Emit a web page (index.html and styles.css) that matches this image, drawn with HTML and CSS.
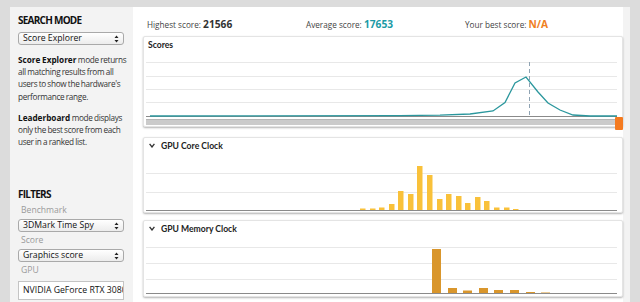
FILE: index.html
```html
<!DOCTYPE html>
<html lang="en">
<head>
    <meta charset="UTF-8">
    <title>Search</title>
    <link rel="stylesheet" href="styles.css">
</head>
<body>
<div class="page">

    <!-- Sidebar -->
    <div class="sidebar">
        <h3 class="side-title">SEARCH MODE</h3>
        <div class="select">
            <span>Score Explorer</span>
            <svg class="arrows" width="5" height="8" viewBox="0 0 5 8"><path d="M0.5 3 L2.5 0.5 L4.5 3 Z M0.5 5 L2.5 7.5 L4.5 5 Z" fill="#222"/></svg>
        </div>
        <p class="help"><b>Score Explorer</b> mode returns all matching results from all users to show the hardware's performance range.</p>
        <p class="help"><b>Leaderboard</b> mode displays only the best score from each user in a ranked list.</p>

        <h3 class="side-title filters">FILTERS</h3>
        <div class="label">Benchmark</div>
        <div class="select">
            <span>3DMark Time Spy</span>
            <svg class="arrows" width="5" height="8" viewBox="0 0 5 8"><path d="M0.5 3 L2.5 0.5 L4.5 3 Z M0.5 5 L2.5 7.5 L4.5 5 Z" fill="#222"/></svg>
        </div>
        <div class="label">Score</div>
        <div class="select">
            <span>Graphics score</span>
            <svg class="arrows" width="5" height="8" viewBox="0 0 5 8"><path d="M0.5 3 L2.5 0.5 L4.5 3 Z M0.5 5 L2.5 7.5 L4.5 5 Z" fill="#222"/></svg>
        </div>
        <div class="label">GPU</div>
        <div class="text-input">NVIDIA GeForce RTX 3080</div>
    </div>

    <!-- Results -->
    <div class="main">
        <div class="stats">
            <div class="stat">Highest score: <b class="num">21566</b></div>
            <div class="stat">Average score: <b class="num avg">17653</b></div>
            <div class="stat">Your best score: <b class="num best">N/A</b></div>
        </div>

        <div class="card card-scores">
            <div class="card-title">Scores</div>
            <svg class="chart" width="478" height="73" viewBox="0 0 478 73">
                <g stroke="#e8e8e8" stroke-width="1">
                    <line x1="2" y1="9.5" x2="473" y2="9.5"/>
                    <line x1="2" y1="23.5" x2="473" y2="23.5"/>
                    <line x1="2" y1="36.5" x2="473" y2="36.5"/>
                    <line x1="2" y1="49.5" x2="473" y2="49.5"/>
                </g>
                <line x1="2" y1="63.5" x2="473" y2="63.5" stroke="#8a8a8a"/>
                <line x1="385.5" y1="9" x2="385.5" y2="63" stroke="#8fa3b3" stroke-dasharray="4 3"/>
                <polyline fill="none" stroke="#2b979d" stroke-width="1.3"
                    points="6,63 256,62.7 296,62.2 326,61 349,58 361,49.5 371,30 382,24 394,39 404,50 416,57 429,62 446,63 473,63"/>
                <rect x="2" y="66" width="471" height="6" fill="#cbcbcb"/>
                <rect x="2" y="66" width="471" height="1" fill="#b5b5b5"/>
                <rect x="471" y="64" width="8" height="13" rx="1" fill="#f47a1f"/>
            </svg>
        </div>

        <div class="card card-core">
            <div class="card-title"><svg class="chev" width="6" height="5" viewBox="0 0 6 5"><path d="M0.6 0.8 L3 4 L5.4 0.8" fill="none" stroke="#333" stroke-width="1.3"/></svg>GPU Core Clock</div>
            <svg class="chart" width="478" height="59" viewBox="0 0 478 59">
                <g stroke="#e8e8e8" stroke-width="1">
                    <line x1="2" y1="20.5" x2="473" y2="20.5"/>
                    <line x1="2" y1="39.5" x2="473" y2="39.5"/>
                </g>
                <g fill="#f9c13a">
                    <rect x="216" y="55.5" width="5.5" height="1.5"/>
                    <rect x="226" y="55.5" width="5.5" height="1.5"/>
                    <rect x="235" y="54.5" width="5.5" height="2.5"/>
                    <rect x="245" y="51" width="5.5" height="6"/>
                    <rect x="254" y="38" width="5.5" height="19"/>
                    <rect x="264" y="41" width="5.5" height="16"/>
                    <rect x="273" y="13" width="5.5" height="44"/>
                    <rect x="283" y="22" width="5.5" height="35"/>
                    <rect x="293" y="46" width="5.5" height="11"/>
                    <rect x="302" y="41" width="5.5" height="16"/>
                    <rect x="312" y="43" width="5.5" height="14"/>
                    <rect x="321" y="50" width="5.5" height="7"/>
                    <rect x="331" y="44" width="5.5" height="13"/>
                    <rect x="340" y="48" width="5.5" height="9"/>
                    <rect x="350" y="54.5" width="5.5" height="2.5"/>
                    <rect x="360" y="54.5" width="5.5" height="2.5"/>
                    <rect x="369" y="56" width="5.5" height="1"/>
                </g>
                <line x1="2" y1="57.5" x2="473" y2="57.5" stroke="#8a8a8a"/>
            </svg>
        </div>

        <div class="card card-memory">
            <div class="card-title"><svg class="chev" width="6" height="5" viewBox="0 0 6 5"><path d="M0.6 0.8 L3 4 L5.4 0.8" fill="none" stroke="#333" stroke-width="1.3"/></svg>GPU Memory Clock</div>
            <svg class="chart" width="478" height="60" viewBox="0 0 478 60">
                <g stroke="#e8e8e8" stroke-width="1">
                    <line x1="2" y1="11.5" x2="473" y2="11.5"/>
                    <line x1="2" y1="27.5" x2="473" y2="27.5"/>
                    <line x1="2" y1="43.5" x2="473" y2="43.5"/>
                </g>
                <g fill="#d9962c">
                    <rect x="288" y="13" width="9" height="44"/>
                    <rect x="304" y="52" width="9" height="5"/>
                    <rect x="319" y="54.5" width="9" height="2.5"/>
                    <rect x="335" y="52" width="9" height="5"/>
                    <rect x="350" y="54" width="9" height="3"/>
                    <rect x="366" y="54" width="9" height="3"/>
                    <rect x="382" y="56" width="9" height="1"/>
                    <rect x="397" y="56.5" width="9" height="0.5"/>
                </g>
                <line x1="2" y1="57.5" x2="473" y2="57.5" stroke="#8a8a8a"/>
            </svg>
        </div>
    </div>

</div>
</body>
</html>
```

FILE: styles.css
```css
body {
    margin: 0;
    background-color: #dcdcdc;
    font-family: 'Open Sans', 'Liberation Sans', sans-serif;
    color: #333;
    overflow: hidden;
}

.page {
    display: flex;
    align-items: flex-start;
    padding: 7px 0 0 10px;
    height: 295px;
}

/* Sidebar */
.sidebar {
    width: 106px;
    height: 295px;
    padding: 0 9px 0 8px;
    background-color: #f3f3f3;
    box-sizing: content-box;
    overflow: hidden;
}

.side-title {
    margin: 0;
    padding-top: 7px;
    height: 16px;
    font-size: 10px;
    font-weight: 700;
    letter-spacing: -0.75px;
    color: #111;
    line-height: 13px;
}

.side-title.filters {
    margin-top: 40px;
    padding-top: 0;
    height: 14px;
}

.select {
    display: flex;
    align-items: center;
    justify-content: space-between;
    height: 11px;
    margin-top: 2px;
    padding: 0 4px 0 4px;
    border: 1px solid #a9a9a9;
    border-radius: 3px;
    background: linear-gradient(#ffffff, #ececec);
    font-size: 8.7px;
    color: #111;
    line-height: 11px;
}

.help {
    margin: 9px -6px 0 0;
    font-size: 8.2px;
    letter-spacing: -0.3px;
    word-spacing: -0.4px;
    line-height: 12.2px;
    color: #333;
}

.help b {
    color: #111;
    letter-spacing: 0;
}

.label {
    height: 14px;
    margin-top: 1px;
    padding-left: 3px;
    font-size: 8.6px;
    line-height: 14px;
    color: #9a9a9a;
}

.text-input {
    height: 17px;
    margin-top: 4px;
    padding-left: 4px;
    border: 1px solid #c4c4c4;
    background-color: #fff;
    font-size: 8.7px;
    line-height: 17px;
    color: #111;
    white-space: nowrap;
    overflow: hidden;
}

/* Main panel */
.main {
    width: 487px;
    height: 295px;
    padding-left: 10px;
    background: linear-gradient(to right, #fff 490px, #f3f3f3 490px);
}

.stats {
    display: grid;
    grid-template-columns: 159px 159px 159px;
    height: 29px;
    padding-left: 4px;
    box-sizing: border-box;
    padding-top: 10px;
    font-size: 8.2px;
    line-height: 14px;
    color: #444;
}

.num {
    font-size: 10.2px;
    color: #333;
}

.num.avg {
    color: #1c9aa5;
}

.num.best {
    color: #f0801e;
}

.card {
    width: 478px;
    background-color: #fff;
    border: 1px solid #e4e4e4;
    border-radius: 2px;
    box-shadow: 0 1px 2px rgba(0, 0, 0, 0.3);
}

.card-title {
    display: flex;
    align-items: center;
    height: 15px;
    padding-left: 4px;
    font-family: 'Lato', 'Open Sans', sans-serif;
    font-weight: 700;
    font-size: 8.6px;
    color: #222;
}

.chev {
    margin: 0 6px 0 1px;
}

.chart {
    display: block;
    overflow: visible;
}

.card-scores {
    height: 89px;
}

.card-scores .card-title {
    height: 16px;
}

.card-core {
    margin-top: 10px;
    height: 74px;
}

.card-memory {
    margin-top: 7px;
    height: 75px;
}
```
